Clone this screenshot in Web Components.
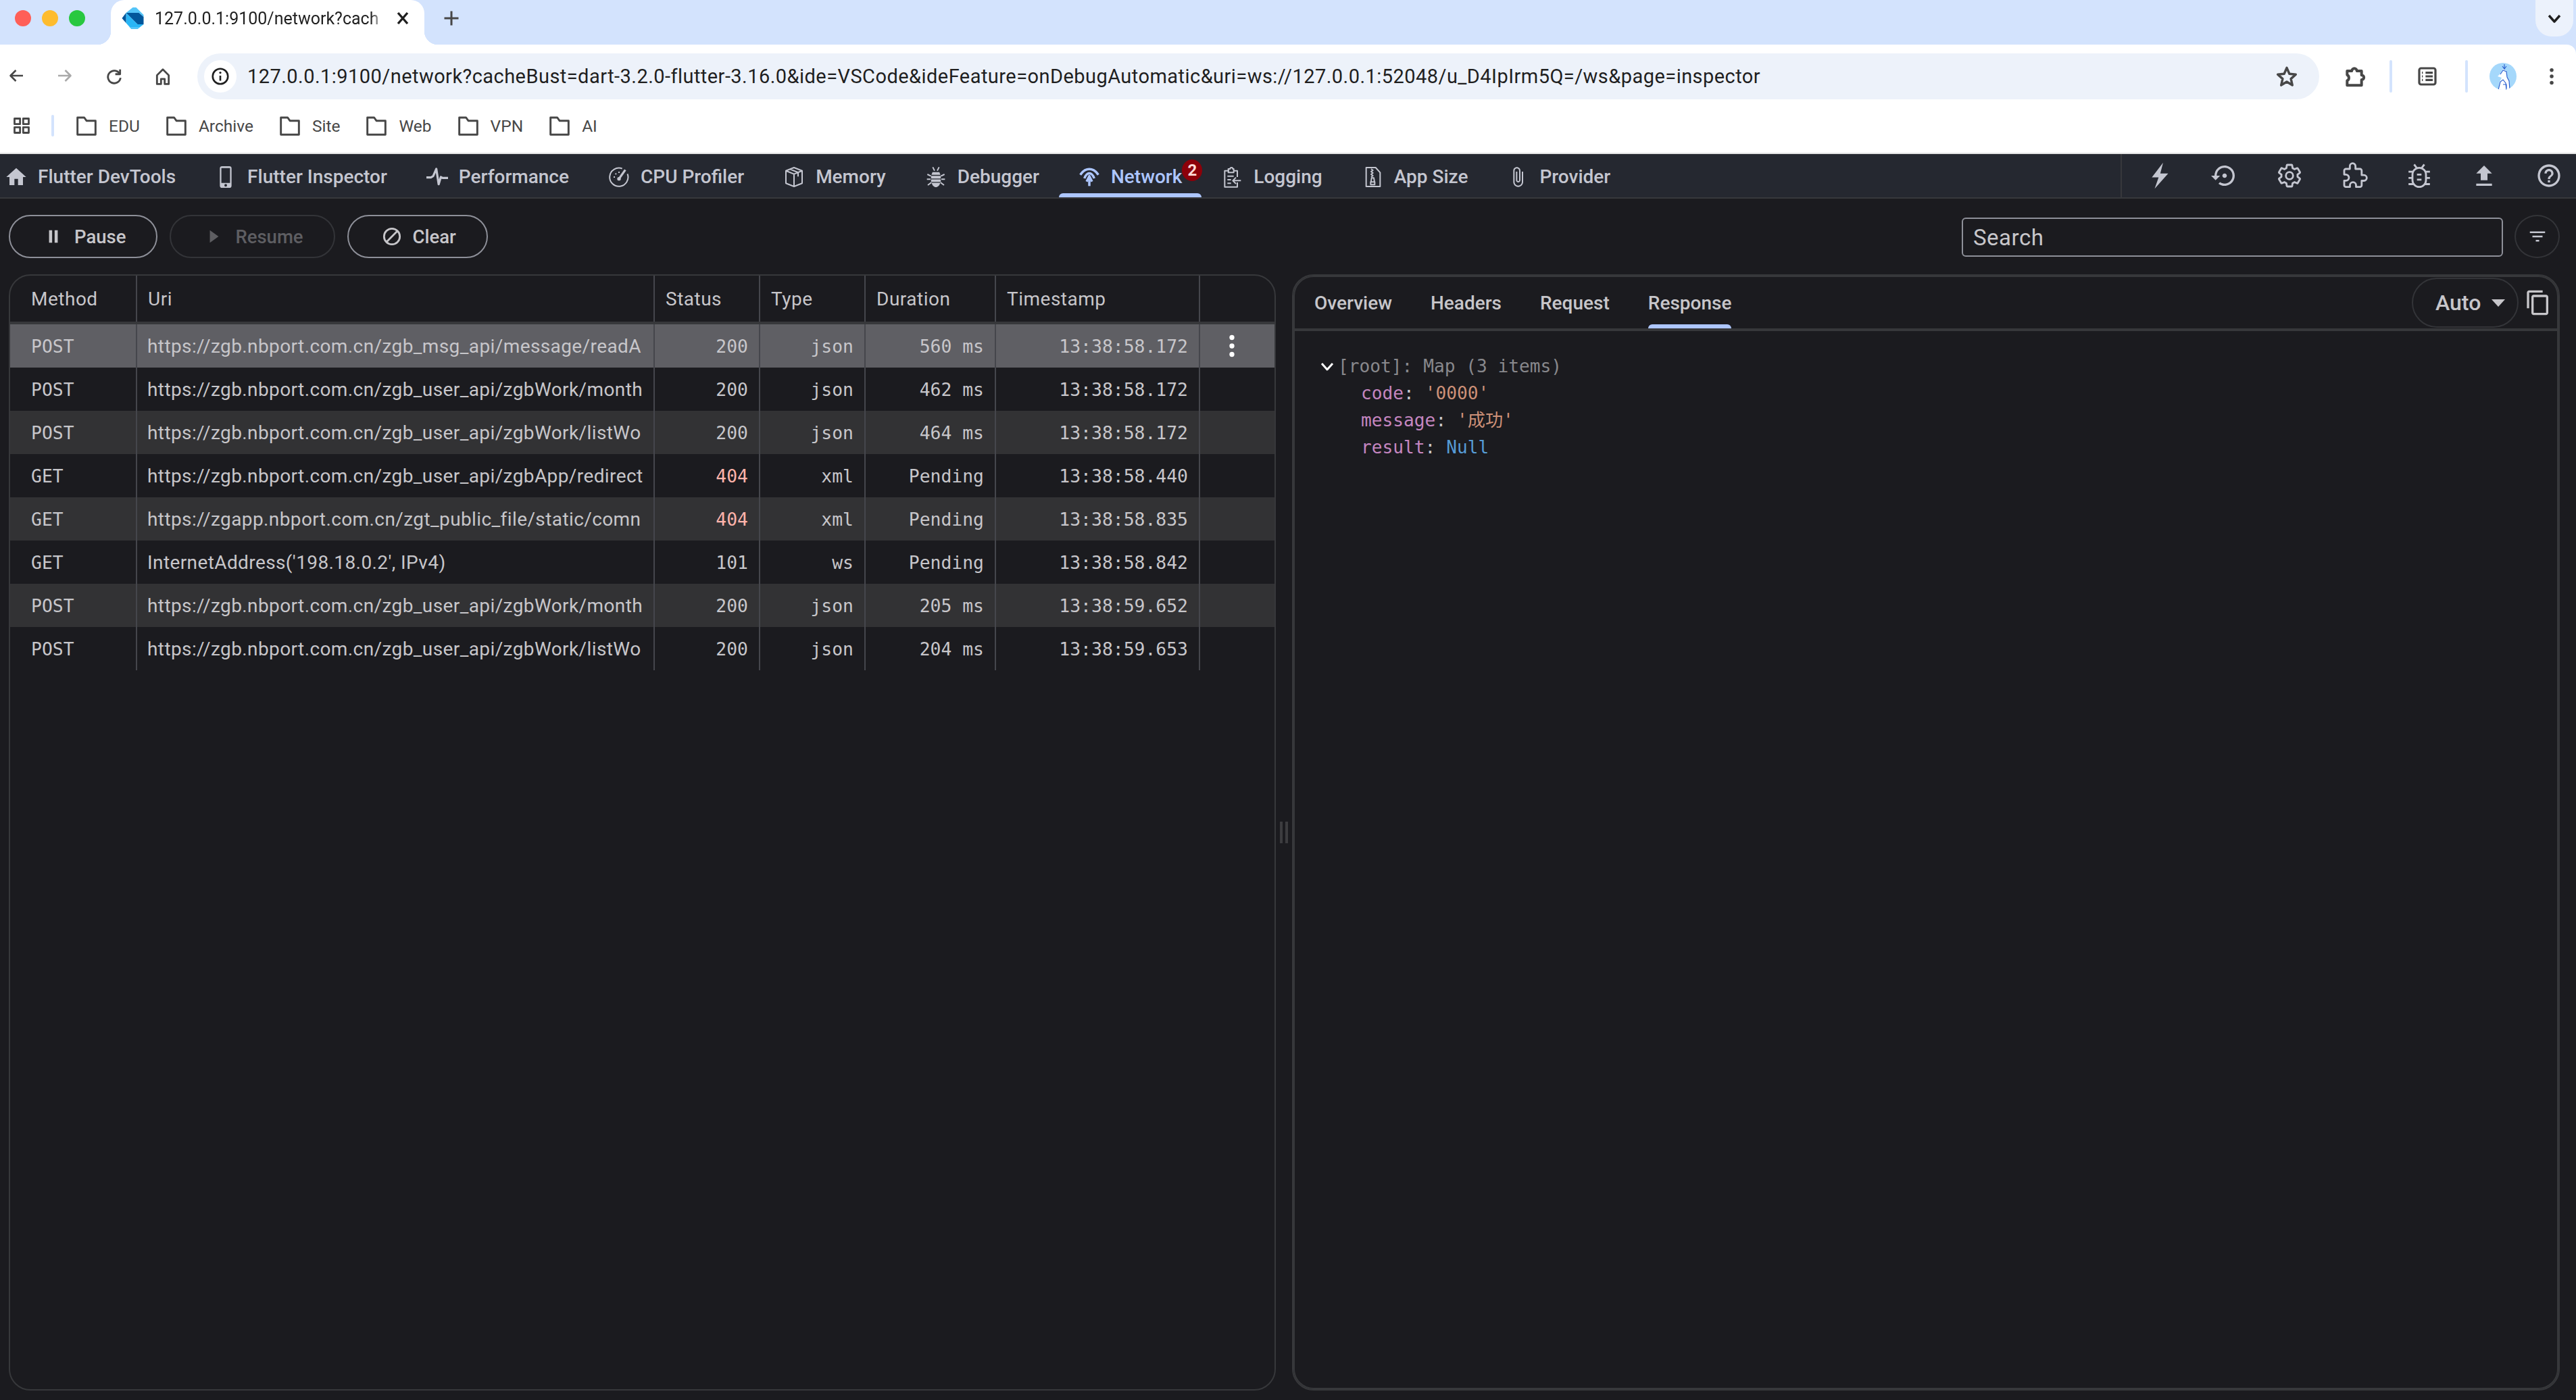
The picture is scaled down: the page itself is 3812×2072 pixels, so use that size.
<!DOCTYPE html>
<html>
<head>
<meta charset="utf-8">
<title>Flutter DevTools</title>
<style>
  html, body { margin: 0; height: 100%; overflow: hidden; background: #1b1b1f; }
  body { display: flex; flex-direction: column; font-family: Roboto, "Noto Sans CJK SC", sans-serif; }
</style>
</head>
<body>
  <chrome-tabstrip title-text="127.0.0.1:9100/network?cach"></chrome-tabstrip>
  <chrome-toolbar url="127.0.0.1:9100/network?cacheBust=dart-3.2.0-flutter-3.16.0&amp;ide=VSCode&amp;ideFeature=onDebugAutomatic&amp;uri=ws://127.0.0.1:52048/u_D4IpIrm5Q=/ws&amp;page=inspector"></chrome-toolbar>
  <chrome-bookmarks>
    <bookmark-item>EDU</bookmark-item>
    <bookmark-item>Archive</bookmark-item>
    <bookmark-item>Site</bookmark-item>
    <bookmark-item>Web</bookmark-item>
    <bookmark-item>VPN</bookmark-item>
    <bookmark-item>AI</bookmark-item>
  </chrome-bookmarks>

  <devtools-nav>
    <nav-tab icon="home" first>Flutter DevTools</nav-tab>
    <nav-tab icon="phone">Flutter Inspector</nav-tab>
    <nav-tab icon="pulse">Performance</nav-tab>
    <nav-tab icon="gauge">CPU Profiler</nav-tab>
    <nav-tab icon="box">Memory</nav-tab>
    <nav-tab icon="bugfill">Debugger</nav-tab>
    <nav-tab icon="network" active badge="2">Network</nav-tab>
    <nav-tab icon="logging">Logging</nav-tab>
    <nav-tab icon="zip">App Size</nav-tab>
    <nav-tab icon="clip">Provider</nav-tab>
  </devtools-nav>

  <network-screen>
    <network-controls slot="controls"></network-controls>
    <network-table slot="left">
      <net-row method="POST" uri="https://zgb.nbport.com.cn/zgb_msg_api/message/readA" status="200" type="json" duration="560 ms" time="13:38:58.172" selected></net-row>
      <net-row method="POST" uri="https://zgb.nbport.com.cn/zgb_user_api/zgbWork/month" status="200" type="json" duration="462 ms" time="13:38:58.172"></net-row>
      <net-row method="POST" uri="https://zgb.nbport.com.cn/zgb_user_api/zgbWork/listWo" status="200" type="json" duration="464 ms" time="13:38:58.172" alt></net-row>
      <net-row method="GET" uri="https://zgb.nbport.com.cn/zgb_user_api/zgbApp/redirect" status="404" type="xml" duration="Pending" time="13:38:58.440" error></net-row>
      <net-row method="GET" uri="https://zgapp.nbport.com.cn/zgt_public_file/static/comn" status="404" type="xml" duration="Pending" time="13:38:58.835" alt error></net-row>
      <net-row method="GET" uri="InternetAddress('198.18.0.2', IPv4)" status="101" type="ws" duration="Pending" time="13:38:58.842"></net-row>
      <net-row method="POST" uri="https://zgb.nbport.com.cn/zgb_user_api/zgbWork/month" status="200" type="json" duration="205 ms" time="13:38:59.652" alt></net-row>
      <net-row method="POST" uri="https://zgb.nbport.com.cn/zgb_user_api/zgbWork/listWo" status="200" type="json" duration="204 ms" time="13:38:59.653"></net-row>
    </network-table>
    <detail-panel slot="right">
      <json-tree></json-tree>
    </detail-panel>
  </network-screen>

<script>
// All icons drawn on a 24 unit box. f = filled, s = stroked
const ICONS = {
  back: '<path class="s" d="M22 12H4M11.5 4L3.5 12l8 8"/>',
  reload: '<path class="s" d="M19.5 8.5A8.6 8.6 0 1 0 20.6 14"/><path class="s" d="M20 2.5v6.5h-6.5"/>',
  houseline: '<path class="s" d="M4 22.5V10.5l8-8 8 8v12h-5.5v-7h-5v7z"/>',
  info: '<circle class="s" cx="12" cy="12" r="10.4"/><path class="s" d="M12 11v7"/><circle class="f" cx="12" cy="7" r="1.5"/>',
  star: '<path class="s" d="M12 2.5l2.9 6.7 7.1.7-5.4 4.8 1.6 7.1L12 18l-6.2 3.8 1.6-7.1L2 9.9l7.1-.7z"/>',
  jigsaw: '<path class="s" d="M4 6h5.2a2.8 2.8 0 0 1 5.6 0H20v4.6a2.6 2.6 0 0 1 0 5.2V22H4v-5.2a3.6 3.6 0 0 0 0-6.4z"/>',
  list: '<rect class="s" x="3" y="3" width="18" height="18" rx="2"/><path class="s" d="M10 8h8M10 12h8M10 16h8M6 8h1M6 12h1M6 16h1"/>',
  dots: '<circle class="f" cx="12" cy="4.5" r="2.2"/><circle class="f" cx="12" cy="12" r="2.2"/><circle class="f" cx="12" cy="19.5" r="2.2"/>',
  apps: '<path class="s" d="M3 3h7v7H3zM14 3h7v7h-7zM3 14h7v7H3zM14 14h7v7h-7z"/>',
  folder: '<path class="s" d="M2 3h7.5l2.5 3.5h10V22H2z"/>',
  chevdown: '<path class="s" d="M4 8l8 9 8-9"/>',

  home: '<path class="f" d="M10 21v-7h4v7h5.5v-9H23L12 2 1 12h3.5v9z"/>',
  phone: '<path class="f" fill-rule="evenodd" d="M8 0h8a2.5 2.5 0 0 1 2.5 2.5v19A2.5 2.5 0 0 1 16 24H8a2.5 2.5 0 0 1-2.5-2.5v-19A2.5 2.5 0 0 1 8 0zM7.2 2v16.6h9.6V2zM12 19.7a1.5 1.5 0 1 0 0 3 1.5 1.5 0 0 0 0-3z"/>',
  pulse: '<path class="s" d="M0 12.5h5l2.5-1.5L11 3l2.6 17 2.4-8 2 1h6"/>',
  gauge: '<path class="s t" d="M15.5 2.6A10.2 10.2 0 1 0 21.4 8.5"/><path class="s" d="M12 14L19 4"/><path class="s t" d="M6 12h1.5M8 8l1 1M12 6v1.5"/><circle class="f" cx="12" cy="14" r="2"/>',
  box: '<path class="s t" d="M12 1.5l9 3.6v13.8l-9 3.6-9-3.6V5.1zM3 5.1l9 3.6 9-3.6M12 8.7v13.8M7.5 3.3l9 3.6v4.5"/>',
  bugfill: '<path class="s t" d="M8.5 1l2 4M15.5 1l-2 4M2.5 9l4 2M21.5 9l-4 2M2 14.5h4M22 14.5h-4M3 21l4-3M21 21l-4-3"/><path class="f" d="M8.2 6.5h7.6L17 9.5H7zM6.6 10.6h10.8v3H6.6zM6.6 14.6h10.8v2.8H6.6zM7.2 18.4h9.6C16 21.5 14 23.3 12 23.3S8 21.5 7.2 18.4z"/>',
  network: '<path class="s n" d="M2 9.5C5 5 8.5 3.2 12 3.2S19 5 22 9.5"/><path class="s n" d="M6.5 13.5C8 9.5 10 7.8 12 7.8s4 1.7 5.5 5.7"/><path class="s n" d="M12 11v11"/><path class="s n" d="M9 17l3-6 3 6"/>',
  logging: '<path class="s t" d="M9 5H4v18h14v-5M14 5h4v7"/><path class="s t" d="M8 5V3h2a1.5 1.5 0 0 1 3 0h1v4H8zM7 11h7M7 15h4M7 19h4"/><path class="s t" d="M22 16h-9M16.5 12.5L13 16l3.5 3.5"/>',
  zip: '<path class="s t" d="M5 1.5h10.5l5 5.5v15.5H5z"/><path class="s t" d="M10.5 3l2 1.5-2 1.5 2 1.5-2 1.5 2 1.5-2 1.5"/><path class="s t" d="M10 17.5h4.5v3H10zM11 13h2.5l.8 4.5h-4z"/>',
  clip: '<path class="f" d="M16.5 6v11.5c0 2.21-1.79 4-4 4s-4-1.79-4-4V5c0-1.38 1.12-2.5 2.5-2.5s2.5 1.12 2.5 2.5v10.5c0 .55-.45 1-1 1s-1-.45-1-1V6H10v9.5c0 1.38 1.12 2.5 2.5 2.5s2.5-1.12 2.5-2.5V5c0-2.21-1.79-4-4-4S7 2.79 7 5v12.5c0 3.04 2.46 5.5 5.5 5.5s5.5-2.46 5.5-5.5V6h-1.5z"/>',

  bolt: '<path class="f" d="M15 .5L5 13.5h6L7.5 23.5 19.5 10h-7z"/>',
  restore: '<path class="f" d="M14 12c0-1.1-.9-2-2-2s-2 .9-2 2 .9 2 2 2 2-.9 2-2zm-2-9c-4.97 0-9 4.03-9 9H0l4 4 4-4H5c0-3.87 3.13-7 7-7s7 3.13 7 7-3.13 7-7 7c-1.51 0-2.91-.49-4.06-1.3l-1.42 1.44C8.04 20.3 9.94 21 12 21c4.97 0 9-4.03 9-9s-4.03-9-9-9z"/>',
  gear: '<path class="s" d="M19.14 12.94c.04-.3.06-.61.06-.94 0-.32-.02-.64-.07-.94l2.03-1.58c.18-.14.23-.41.12-.61l-1.92-3.32c-.12-.22-.37-.29-.59-.22l-2.39.96c-.5-.38-1.03-.7-1.62-.94l-.36-2.54c-.04-.24-.24-.41-.48-.41h-3.84c-.24 0-.43.17-.47.41l-.36 2.54c-.59.24-1.13.57-1.62.94l-2.39-.96c-.22-.08-.47 0-.59.22L2.74 8.87c-.12.21-.08.47.12.61l2.03 1.58c-.05.3-.09.63-.09.94s.02.64.07.94l-2.03 1.58c-.18.14-.23.41-.12.61l1.92 3.32c.12.22.37.29.59.22l2.39-.96c.5.38 1.03.7 1.62.94l.36 2.54c.05.24.24.41.48.41h3.84c.24 0 .44-.17.47-.41l.36-2.54c.59-.24 1.13-.56 1.62-.94l2.39.96c.22.08.47 0 .59-.22l1.92-3.32c.12-.22.07-.47-.12-.61l-2.01-1.58z"/><circle class="s" cx="12" cy="12" r="3.2"/>',
  puzzle: '<path class="s" d="M20.5 11.5H18.5V7.5c0-.8-.7-1.5-1.5-1.5h-4V3.5a2.5 2.5 0 0 0-5 0V6H4.5C3.7 6 3 6.7 3 7.5V11h1.5a2.7 2.7 0 0 1 0 5.4H3v4.1c0 .8.7 1.5 1.5 1.5h3.6v-1.5a2.7 2.7 0 0 1 5.4 0V22H17c.8 0 1.5-.7 1.5-1.5v-4h2a2.5 2.5 0 0 0 0-5z"/>',
  bug: '<path class="s" d="M7.5 2l2.5 3.5M16.5 2L14 5.5M2.5 8.5h4M21.5 8.5h-4M2.5 14h3.5M21.5 14H18M2.5 19.5h4.5M21.5 19.5H17"/><rect class="s" x="6" y="5" width="12" height="17" rx="6"/><path class="s" d="M10 11h4M10 15.5h4"/>',
  upload: '<path class="f" d="M9 16h6v-6h4l-7-7-7 7h4zM5 19h14v2H5z"/>',
  help: '<path class="f" d="M11 18h2v-2h-2v2zm1-16C6.48 2 2 6.48 2 12s4.48 10 10 10 10-4.48 10-10S17.52 2 12 2zm0 18c-4.41 0-8-3.59-8-8s3.59-8 8-8 8 3.59 8 8-3.59 8-8 8zm0-14c-2.21 0-4 1.79-4 4h2c0-1.1.9-2 2-2s2 .9 2 2c0 2-3 1.75-3 5h2c0-2.25 3-2.5 3-5 0-2.21-1.79-4-4-4z"/>',

  pause: '<path class="f" d="M5 2h5v20H5zM14 2h5v20h-5z"/>',
  play: '<path class="f" d="M5 2l14 10L5 22z"/>',
  clear: '<circle class="s" cx="12" cy="12" r="10"/><path class="s" d="M5 19L19 5"/>',
  filter: '<path class="f" d="M10 18h4v-2h-4v2zM3 6v2h18V6H3zm3 7h12v-2H6v2z"/>',
  copy: '<path class="f" d="M16 1H4c-1.1 0-2 .9-2 2v14h2V3h12V1zm3 4H8c-1.1 0-2 .9-2 2v14c0 1.1.9 2 2 2h11c1.1 0 2-.9 2-2V7c0-1.1-.9-2-2-2zm0 16H8V7h11v14z"/>',
  caret: '<path class="f" d="M2 7h20L12 18z"/>'
};

// base class, subclasses just return their shadow markup from render()
class ShadowElement extends HTMLElement {
  connectedCallback() {
    if (this.shadowRoot) return;
    this.attachShadow({ mode: 'open' });
    this.shadowRoot.innerHTML = this.render();
  }
}

class AppIcon extends ShadowElement {
  render() {
    const size = this.getAttribute('size') || 24;
    const sw = this.getAttribute('stroke') || 2.4;
    return `
      <style>
        :host { display: inline-flex; flex: none; color: inherit; width: ${size}px; height: ${size}px; }
        svg { width: 100%; height: 100%; display: block; overflow: visible; }
        .f { fill: currentColor; }
        .s { fill: none; stroke: currentColor; stroke-width: ${sw}; stroke-linejoin: round; }
        .t { stroke-width: 1.5; }
        .n { stroke-width: 2.6; }
      </style>
      <svg viewBox="0 0 24 24">${ICONS[this.getAttribute('name')] || ''}</svg>`;
  }
}
customElements.define('app-icon', AppIcon);

class ChromeTabstrip extends ShadowElement {
  render() {
    return `
      <style>
        :host { display: flex; align-items: stretch; height: 66px; background: #d3e3fd; flex: none; }
        .lights { display: flex; gap: 16px; align-items: center; padding: 0 0 12px 22px; width: 164px; box-sizing: border-box; }
        .lights i { width: 24px; height: 24px; border-radius: 50%; }
        .tab { position: relative; width: 464px; background: #fff; border-radius: 20px 20px 0 0; display: flex; align-items: center; padding: 0 0 12px 16px; box-sizing: border-box; gap: 16px; }
        .tab::before, .tab::after { content: ""; position: absolute; bottom: 0; width: 20px; height: 20px; }
        .tab::before { left: -20px; background: radial-gradient(circle at 0 0, transparent 20px, #fff 20.5px); }
        .tab::after { right: -20px; background: radial-gradient(circle at 100% 0, transparent 20px, #fff 20.5px); }
        .title { width: 340px; overflow: hidden; white-space: nowrap; font: 400 25px Roboto, sans-serif; color: #1f1f1f;
          -webkit-mask-image: linear-gradient(to right, #000 94%, transparent); mask-image: linear-gradient(to right, #000 94%, transparent); }
        .close { width: 24px; height: 24px; color: #1f1f1f; margin-left: -1px; }
        .plus { width: 28px; height: 28px; margin: 13px 0 0 26px; color: #474747; }
        .spacer { flex: 1; }
        .more { width: 56px; height: 54px; margin-right: 4px; background: #ecf2fc; border-radius: 0 0 24px 24px; display: flex; align-items: center; justify-content: center; color: #1f1f1f; }
      </style>
      <div class="lights">
        <i style="background:#ff5f57"></i><i style="background:#febc2e"></i><i style="background:#28c840"></i>
      </div>
      <div class="tab">
        <svg width="33" height="32" viewBox="0 0 32 32" style="flex:none">
          <polygon fill="#54c5f8" points="6,8 16,0 21,0 32,11 32,14 25,8"/>
          <polygon fill="#01579b" points="6,8 25,8 32,14 32,25 23,25"/>
          <polygon fill="#29b6f6" points="6,8 23,25 32,25 23,32 14,32 6,23"/>
          <polygon fill="#54c5f8" points="14,32 23,32 26,29 11,29"/>
          <polygon fill="#01579b" points="0,16 6,8 6,23"/>
        </svg>
        <div class="title">${this.getAttribute('title-text')}</div>
        <svg class="close" viewBox="0 0 24 24"><path d="M5 4l14 16M19 4L5 20" stroke="currentColor" stroke-width="3.4" fill="none"/></svg>
      </div>
      <svg class="plus" viewBox="0 0 24 24"><path d="M12 3v18M3 12h18" stroke="currentColor" stroke-width="2.6" fill="none"/></svg>
      <div class="spacer"></div>
      <div class="more"><app-icon name="chevdown" size="24" stroke="3.4"></app-icon></div>`;
  }
}
customElements.define('chrome-tabstrip', ChromeTabstrip);

class ChromeToolbar extends ShadowElement {
  render() {
    return `
      <style>
        :host { display: block; background: #d3e3fd; flex: none; }
        .bar { height: 94px; background: #fff; border-top-right-radius: 14px; display: flex; align-items: center; color: #474747; }
        .nav { display: grid; grid-template-columns: repeat(4, 24px); gap: 48px; padding-left: 12px; margin-right: 40px; }
        .dim { color: #a9a9a9; }
        .omni { flex: 1 1 auto; min-width: 0; height: 68px; border-radius: 34px; background: #edf2fa; display: flex; align-items: center; padding: 0 32px 0 10px; box-sizing: border-box; margin-right: 36px; }
        .chip { width: 48px; height: 48px; border-radius: 50%; background: #fff; display: flex; align-items: center; justify-content: center; flex: none; margin-right: 16px; color: #1f1f1f; }
        .url { flex: 1; font: 400 29px Roboto, sans-serif; letter-spacing: .45px; color: #1f1f1f; white-space: nowrap; overflow: hidden; }
        .right { display: flex; align-items: center; flex: none; }
        .sep { width: 4px; height: 48px; background: #d3e3fd; border-radius: 2px; }
        .avatar { width: 40px; height: 40px; border-radius: 50%; background: #a5d8fb; overflow: hidden; }
      </style>
      <div class="bar">
        <div class="nav">
          <app-icon name="back" size="24" stroke="2.6"></app-icon>
          <app-icon class="dim" name="back" size="24" stroke="2.6" style="transform:scaleX(-1)"></app-icon>
          <app-icon name="reload" size="26" stroke="2.6"></app-icon>
          <app-icon name="houseline" size="26" stroke="2.6"></app-icon>
        </div>
        <div class="omni">
          <div class="chip"><app-icon name="info" size="26" stroke="2.4"></app-icon></div>
          <div class="url">${this.getAttribute('url').replace(/&/g, '&amp;')}</div>
          <app-icon name="star" size="32" stroke="2.6"></app-icon>
        </div>
        <div class="right">
          <app-icon name="jigsaw" size="32" stroke="3"></app-icon>
          <div class="sep" style="margin:0 36px"></div>
          <app-icon name="list" size="32" stroke="2.4"></app-icon>
          <div class="sep" style="margin:0 32px 0 40px"></div>
          <svg class="avatar" viewBox="0 0 40 40">
            <path fill="#fff" d="M20 9l5 3 1 8 3 6 1 14H13l2-12 3-6-6-2 4-4z"/>
            <path fill="none" stroke="#2f63d0" stroke-width="1.2" d="M22 2v8M19 5l3 4 3-4M16 17l4-6 5 2 1 8 3 6 1 12M13 40l3-12 4-3 4 5 1 10M20 32h5v6"/>
          </svg>
          <app-icon name="dots" size="30" style="margin:0 21px 0 37px"></app-icon>
        </div>
      </div>`;
  }
}
customElements.define('chrome-toolbar', ChromeToolbar);

class ChromeBookmarks extends ShadowElement {
  render() {
    return `
      <style>
        :host { display: flex; align-items: center; height: 66px; box-sizing: content-box; padding: 0 0 0 18px; background: #fff; border-bottom: 2px solid #e3e3e3; flex: none; color: #474747; }
        .wrap { display: flex; align-items: center; margin-top: -14px; }
        .sep { width: 4px; height: 32px; background: #d3e3fd; border-radius: 2px; margin: 0 32px 0 30px; }
        .items { display: flex; gap: 38px; }
      </style>
      <div class="wrap">
        <app-icon name="apps" size="28" stroke="2.4"></app-icon>
        <div class="sep"></div>
        <div class="items"><slot></slot></div>
      </div>`;
  }
}
customElements.define('chrome-bookmarks', ChromeBookmarks);

class BookmarkItem extends ShadowElement {
  render() {
    return `
      <style>
        :host { display: inline-flex; align-items: center; gap: 17px; font: 400 24.5px Roboto, sans-serif; color: #474747; }
      </style>
      <app-icon name="folder" size="32" stroke="2.2"></app-icon><slot></slot>`;
  }
}
customElements.define('bookmark-item', BookmarkItem);

class DevtoolsNav extends ShadowElement {
  render() {
    const acts = ['bolt', 'restore', 'gear', 'puzzle', 'bug', 'upload', 'help'];
    return `
      <style>
        :host { display: flex; height: 64px; background: #252830; border-bottom: 2px solid #37383c; flex: none; color: #c4c6d0; }
        .tabs { display: flex; }
        .acts { margin-left: auto; display: grid; grid-auto-flow: column; grid-auto-columns: 80px; gap: 16px; align-items: center; justify-items: center; border-left: 2px solid #37383c; padding-left: 16px; }
      </style>
      <div class="tabs"><slot></slot></div>
      <div class="acts">${acts.map(a => `<app-icon name="${a}" size="40" stroke="1.7"></app-icon>`).join('')}</div>`;
  }
}
customElements.define('devtools-nav', DevtoolsNav);

class NavTab extends ShadowElement {
  render() {
    const badge = this.getAttribute('badge');
    return `
      <style>
        :host { position: relative; display: flex; align-items: center; gap: 16px; padding: 3px 29px 0; font: 500 28px Roboto, sans-serif; color: #c4c6d0; white-space: nowrap; }
        :host([first]) { padding-left: 8px; }
        :host([active]) { color: #adc6ff; }
        :host([active])::after { content: ""; position: absolute; left: 0; right: 0; bottom: 0; height: 6px; background: #adc6ff; border-radius: 6px 6px 0 0; }
        .badge { position: absolute; right: -1px; top: 8px; width: 30px; height: 32px; border-radius: 50%; background: #8c0009; color: #ffdad6; font: 700 24px Roboto, sans-serif; display: flex; align-items: center; justify-content: center; }
      </style>
      <app-icon name="${this.getAttribute('icon')}" size="32"></app-icon><slot></slot>
      ${badge ? `<span class="badge">${badge}</span>` : ''}`;
  }
}
customElements.define('nav-tab', NavTab);

class NetworkScreen extends ShadowElement {
  render() {
    return `
      <style>
        :host { display: flex; flex-direction: column; flex: 1; min-height: 0; background: #1b1b1f; padding: 0 24px 14px 13px; }
        .panes { flex: 1; min-height: 0; display: grid; grid-template-columns: 1875px 24px 1fr; }
        .grip { display: flex; justify-content: center; align-items: center; gap: 4px; }
        .grip i { width: 4px; height: 32px; background: #3c3c3f; }
      </style>
      <slot name="controls"></slot>
      <div class="panes">
        <slot name="left"></slot>
        <div class="grip"><i></i><i></i></div>
        <slot name="right"></slot>
      </div>`;
  }
}
customElements.define('network-screen', NetworkScreen);

class PillButton extends ShadowElement {
  render() {
    return `
      <style>
        :host { display: inline-flex; align-items: center; gap: 17px; height: 64px; box-sizing: border-box; padding: 0 45px 0 50px; border: 2px solid #8e9099; border-radius: 32px; font: 500 27.5px Roboto, sans-serif; color: #c7c6ca; }
        :host([disabled]) { border-color: #333438; color: #5e5e62; }
      </style>
      <app-icon name="${this.getAttribute('icon')}" size="${this.getAttribute('size') || 22}" style="width:28px;justify-content:center"></app-icon><slot></slot>`;
  }
}
customElements.define('pill-button', PillButton);

class NetworkControls extends ShadowElement {
  render() {
    return `
      <style>
        :host { display: flex; align-items: center; height: 112px; gap: 18px; }
        .search { margin-left: auto; width: 801px; height: 58px; margin-top: 2px; box-sizing: border-box; border: 2px solid #8e9099; border-radius: 6px; padding-left: 15px; display: flex; align-items: center; font: 400 33px Roboto, sans-serif; letter-spacing: .5px; color: #c7c6ca; margin-right: -1px; }
        .filter { width: 67px; height: 64px; box-sizing: border-box; border: 2px solid #333438; border-radius: 50%; display: flex; align-items: center; justify-content: center; color: #c4c6d0; }
      </style>
      <pill-button icon="pause">Pause</pill-button>
      <pill-button icon="play" disabled>Resume</pill-button>
      <pill-button icon="clear" size="28">Clear</pill-button>
      <div class="search">Search</div>
      <div class="filter"><app-icon name="filter" size="30"></app-icon></div>`;
  }
}
customElements.define('network-controls', NetworkControls);

class NetworkTable extends ShadowElement {
  render() {
    return `
      <style>
        :host { display: block; box-sizing: border-box; border: 2px solid #37383b; border-radius: 32px; overflow: hidden; --cols: 188px 766px 156px 156px 193px 302px 1fr; --line: #45464c; }
        .head { display: grid; grid-template-columns: var(--cols); height: 72px; box-sizing: border-box; border-bottom: 4px solid #37383b; font: 400 28px Roboto, sans-serif; letter-spacing: .5px; color: #c7c6ca; }
        .head div { border-right: 2px solid var(--line); display: flex; align-items: center; padding-left: 16px; }
        .head div:first-child { padding-left: 31px; }
        .head div:last-child { border-right: 0; }
      </style>
      <div class="head"><div>Method</div><div>Uri</div><div>Status</div><div>Type</div><div>Duration</div><div>Timestamp</div><div></div></div>
      <slot></slot>`;
  }
}
customElements.define('network-table', NetworkTable);

class NetRow extends ShadowElement {
  render() {
    const a = n => this.getAttribute(n);
    return `
      <style>
        :host { display: grid; grid-template-columns: var(--cols); height: 64px; color: #c7c6ca; font: 400 26.4px "DejaVu Sans Mono", "Liberation Mono", monospace; }
        :host([alt]) { background: #323234; }
        :host([selected]) { background: #5f5f64; }
        div { border-right: 2px solid var(--line); display: flex; align-items: center; justify-content: flex-end; padding: 0 16px; white-space: nowrap; overflow: hidden; min-width: 0; box-sizing: border-box; }
        .method { justify-content: flex-start; padding-left: 31px; }
        .uri { justify-content: flex-start; padding: 0 12px 0 15px; font: 400 28px Roboto, sans-serif; letter-spacing: .4px; }
        .uri span { display: block; width: 100%; overflow: hidden; }
        :host([error]) .status { color: #ffb4ab; }
        .more { border-right: 0; justify-content: center; color: #fff; padding: 0 16px 0 0; }
      </style>
      <div class="method">${a('method')}</div>
      <div class="uri"><span>${a('uri')}</span></div>
      <div class="status">${a('status')}</div>
      <div>${a('type')}</div>
      <div>${a('duration')}</div>
      <div>${a('time')}</div>
      <div class="more">${this.hasAttribute('selected') ? '<app-icon name="dots" size="40"></app-icon>' : ''}</div>`;
  }
}
customElements.define('net-row', NetRow);

class DetailPanel extends ShadowElement {
  render() {
    const tabs = ['Overview', 'Headers', 'Request', 'Response'];
    return `
      <style>
        :host { display: block; box-sizing: border-box; border: 2px solid #37383b; border-radius: 32px; min-width: 0; }
        .inner { height: 100%; box-sizing: border-box; border: 2px solid #37383b; border-radius: 30px; overflow: hidden; }
        .tabs { height: 80px; box-sizing: border-box; border-bottom: 4px solid #37383b; display: flex; align-items: stretch; padding: 0 8px 0 29px; }
        .tab { position: relative; display: flex; align-items: center; margin-right: 57px; font: 500 28px Roboto, sans-serif; color: #c7c6ca; }
        .tab.on::after { content: ""; position: absolute; left: 0; right: 0; bottom: 0; height: 6px; background: #adc6ff; border-radius: 6px 6px 0 0; }
        .auto { margin-left: auto; margin-top: 1px; height: 74px; width: 158px; box-sizing: border-box; border: 2px solid #333438; border-radius: 37px; display: flex; align-items: center; padding-left: 33px; gap: 14px; font: 500 32px Roboto, sans-serif; color: #c7c6ca; }
        .copy { align-self: center; margin-left: 9px; color: #c7c6ca; }
      </style>
      <div class="inner">
        <div class="tabs">
          ${tabs.map(t => `<div class="tab ${t === 'Response' ? 'on' : ''}">${t}</div>`).join('')}
          <div class="auto">Auto<app-icon name="caret" size="24"></app-icon></div>
          <app-icon class="copy" name="copy" size="40"></app-icon>
        </div>
        <slot></slot>
      </div>`;
  }
}
customElements.define('detail-panel', DetailPanel);

class JsonTree extends ShadowElement {
  render() {
    return `
      <style>
        :host { display: block; padding: 32px 0 0 36px; font: 400 26.2px/40px "DejaVu Sans Mono", "Liberation Mono", "Noto Sans CJK SC", monospace; color: #c7c6ca; }
        .root { display: flex; align-items: center; gap: 4px; color: #88888c; height: 40px; white-space: pre; }
        .kids { padding-left: 62px; }
        .k { color: #c586c0; } .s { color: #ce9178; } .n { color: #569cd6; }
        .cjk { font-family: "Noto Sans CJK SC", sans-serif; line-height: 1; }
        .line { height: 40px; white-space: pre; }
      </style>
      <div class="root"><app-icon name="chevdown" size="24" stroke="3" style="color:#fff"></app-icon><span>[root]: Map (3 items)</span></div>
      <div class="kids">
        <div class="line"><span class="k">code</span>: <span class="s">'0000'</span></div>
        <div class="line"><span class="k">message</span>: <span class="s">'<span class="cjk">成功</span>'</span></div>
        <div class="line"><span class="k">result</span>: <span class="n">Null</span></div>
      </div>`;
  }
}
customElements.define('json-tree', JsonTree);
</script>
</body>
</html>
